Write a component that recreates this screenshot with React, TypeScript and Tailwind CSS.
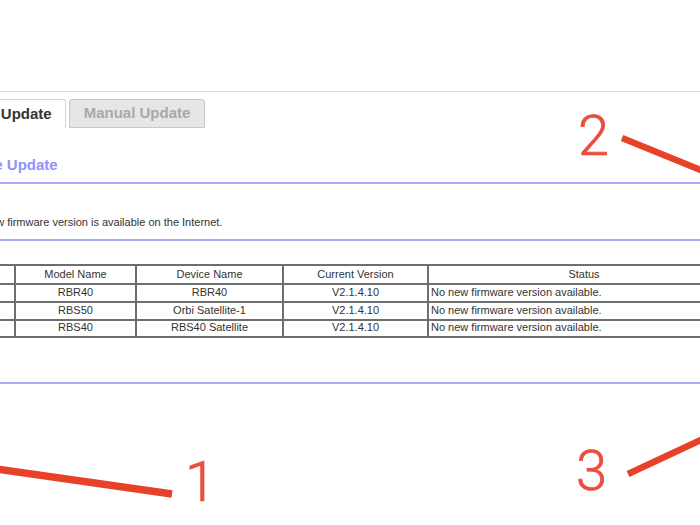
import React from "react";

type Device = {
  model: string;
  name: string;
  version: string;
  status: string;
};

const devices: Device[] = [
  { model: "RBR40", name: "RBR40", version: "V2.1.4.10", status: "No new firmware version available." },
  { model: "RBS50", name: "Orbi Satellite-1", version: "V2.1.4.10", status: "No new firmware version available." },
  { model: "RBS40", name: "RBS40 Satellite", version: "V2.1.4.10", status: "No new firmware version available." },
];

// row heights (incl. bottom border) so the grid lines land where the screenshot has them
const rowHeights = ["h-[18px]", "h-[17px]", "h-[18px]"];

const cell = "border-r-2 border-b-2 border-[#6e6e6e] flex items-center";

const Row = ({ cells, height, header }: { cells: string[]; height: string; header?: boolean }) => (
  <div className={`grid grid-cols-[44px_121px_147px_145px_312px] ${height}`}>
    <div className={cell} />
    <div className={`${cell} justify-center`}>{cells[0]}</div>
    <div className={`${cell} justify-center`}>{cells[1]}</div>
    <div className={`${cell} justify-center`}>{cells[2]}</div>
    <div className={`${cell} ${header ? "justify-center" : "pl-[2px]"}`}>{cells[3]}</div>
  </div>
);

const Annotations = () => (
  <svg className="absolute inset-0 pointer-events-none" width="700" height="525" viewBox="0 0 700 525">
    <g
      fill="#ea4e3d"
      stroke="#ea4e3d"
      strokeWidth="0.7"
      fontFamily="Roboto, 'Liberation Sans', sans-serif"
      fontWeight={300}
      fontSize="56"
    >
      <text x="578" y="155">2</text>
      <text x="185" y="501">1</text>
      <text x="576" y="490">3</text>
    </g>
    <g stroke="#e8412a" strokeLinecap="butt">
      <line x1="622" y1="138" x2="720" y2="178" strokeWidth="6.5" />
      <line x1="-10" y1="468" x2="172" y2="494" strokeWidth="7.5" />
      <line x1="628" y1="474" x2="720" y2="431" strokeWidth="6.5" />
    </g>
  </svg>
);

export default function App() {
  return (
    <div className="relative w-[700px] h-[525px] overflow-hidden bg-white font-['Liberation_Sans',Arial,sans-serif] text-[#333]">
      <div className="h-[91px]" />
      <div className="h-px bg-[#d9d9d9]" />

      {/* tabs */}
      <div className="mt-[7px] flex gap-[3px] whitespace-nowrap">
        <div className="-ml-[64px] h-[29px] px-[13px] flex items-center border border-b-0 border-[#d4d4d4] rounded-tr-[3px] bg-white text-[15px] font-bold text-[#333]">
          Online Update
        </div>
        <div className="h-[29px] px-[14px] flex items-center border border-[#c8c8c8] rounded-t-[3px] bg-[#e6e6e6] text-[15px] font-bold text-[#a8a8a8]">
          Manual Update
        </div>
      </div>

      <div className="mt-[28px] -ml-[44px] leading-[18px] text-[15px] font-bold text-[#9191ff] whitespace-nowrap">
        Online Update
      </div>
      <div className="mt-[8px] h-[2px] bg-[#a8a8ff]" />

      <div className="mt-[31px] -ml-[68px] text-[11px] leading-[14px] whitespace-nowrap">
        Check if a new firmware version is available on the Internet.
      </div>
      <div className="mt-[10px] h-[2px] bg-[#a8a8ff]" />

      {/* device table */}
      <div className="mt-[23px] -ml-[30px] w-[800px] border-t-2 border-l-2 border-[#6e6e6e] text-[11px] whitespace-nowrap">
        <Row cells={["Model Name", "Device Name", "Current Version", "Status"]} height="h-[18px]" header />
        {devices.map((d, i) => (
          <Row key={d.model} cells={[d.model, d.name, d.version, d.status]} height={rowHeights[i]} />
        ))}
      </div>

      <div className="mt-[45px] h-[2px] bg-[#a8a8ff]" />

      <Annotations />
    </div>
  );
}
